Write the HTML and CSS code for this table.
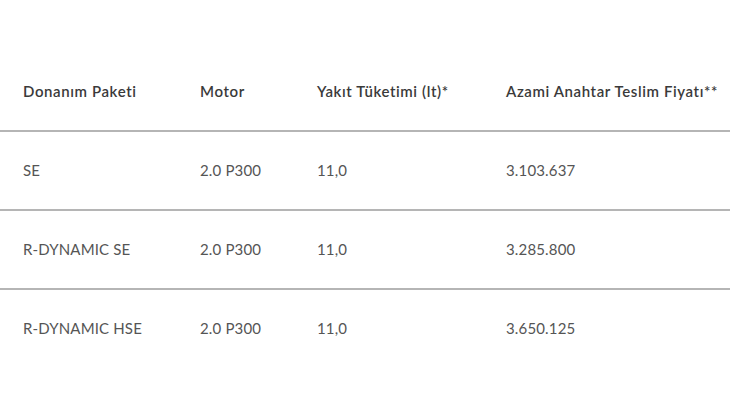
FILE: index.html
```html
<!DOCTYPE html>
<html lang="tr">
<head>
<meta charset="utf-8">
<link rel="stylesheet" href="styles.css">
</head>
<body>
<div class="table">
  <div class="row head">
    <div class="cell">Donanım Paketi</div>
    <div class="cell">Motor</div>
    <div class="cell">Yakıt Tüketimi (lt)*</div>
    <div class="cell">Azami Anahtar Teslim Fiyatı**</div>
  </div>
  <div class="row">
    <div class="cell">SE</div>
    <div class="cell">2.0 P300</div>
    <div class="cell">11,0</div>
    <div class="cell">3.103.637</div>
  </div>
  <div class="row">
    <div class="cell">R-DYNAMIC SE</div>
    <div class="cell">2.0 P300</div>
    <div class="cell">11,0</div>
    <div class="cell">3.285.800</div>
  </div>
  <div class="row last">
    <div class="cell">R-DYNAMIC HSE</div>
    <div class="cell">2.0 P300</div>
    <div class="cell">11,0</div>
    <div class="cell">3.650.125</div>
  </div>
</div>
</body>
</html>
```
FILE: styles.css
```css
html, body {
  margin: 0;
  padding: 0;
  background: #fff;
}
body {
  font-family: Lato, "Open Sans", sans-serif;
  font-size: 15px;
  letter-spacing: 0.15px;
  color: #555;
}
.table {
  padding-top: 52px;
}
.row {
  display: grid;
  grid-template-columns: 177px 117px 189px 1fr;
  padding-left: 23px;
  height: 77px;
  align-items: center;
  border-bottom: 2px solid #b5b5b5;
}
.row.head {
  height: 78px;
  font-weight: 600;
  letter-spacing: 0.6px;
  color: #3a3a3a;
}
.row.last {
  border-bottom: none;
}
.cell {
  white-space: nowrap;
  padding-bottom: 1px;
}
```
